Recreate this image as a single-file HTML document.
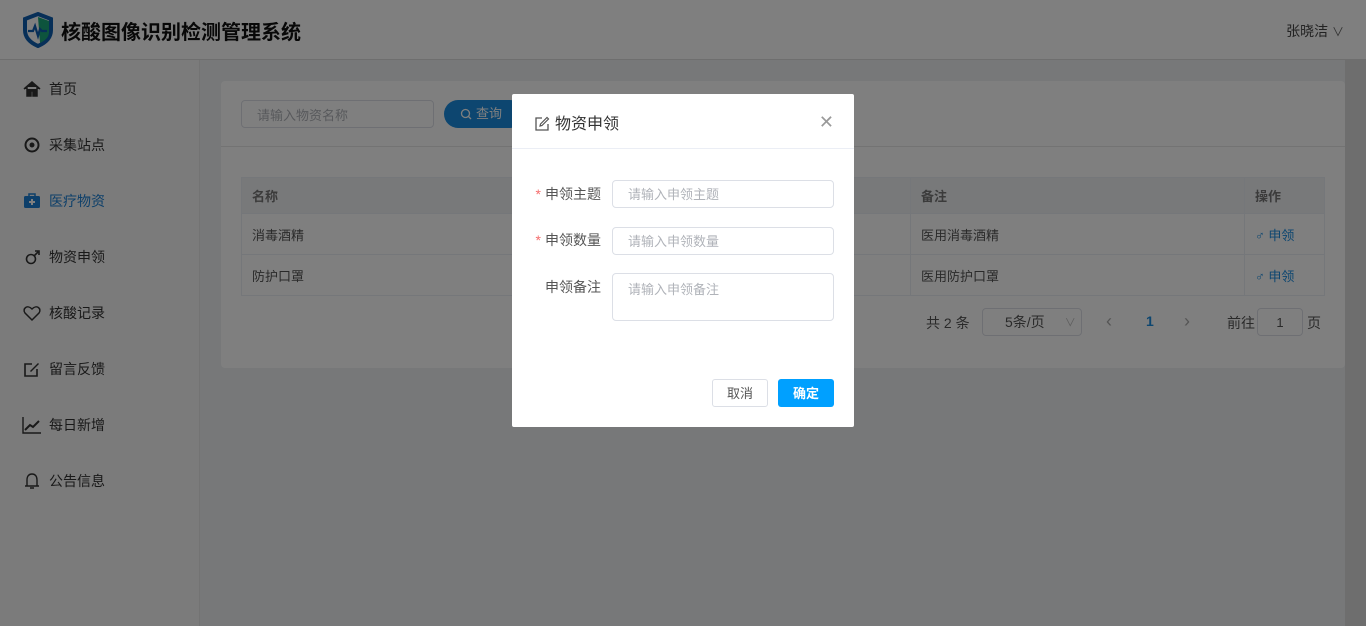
<!DOCTYPE html>
<html><head><meta charset="utf-8"><style>
*{box-sizing:border-box;margin:0;padding:0}
body{width:1366px;height:626px;overflow:hidden;position:relative;background:#eef0f3;font-family:"Liberation Sans","Noto Sans CJK SC",sans-serif;font-size:13px;color:#333}
.hdr{position:absolute;left:0;top:0;width:1366px;height:60px;background:#fff;border-bottom:1px solid #ddd}
.logo{position:absolute;left:22px;top:12px}
.title{position:absolute;left:61px;top:16px;font-size:20px;font-weight:bold;color:#111}
.user{position:absolute;right:22px;top:21px;font-size:14px;color:#444}
.side{position:absolute;left:0;top:60px;width:200px;height:566px;background:#f7f7f7;border-right:1px solid #e6e6e6}
.mi{position:absolute;left:22px;height:20px;display:flex;align-items:center;font-size:14px;color:#333}
.mi svg{width:20px;height:20px;margin-right:7px}
.card{position:absolute;left:221px;top:81px;width:1124px;height:287px;background:#fff;border-radius:4px}
.inp{position:absolute;border:1px solid #dcdfe6;border-radius:4px;background:#fff;color:#b0b3b9;font-size:13px;padding-left:15px;display:flex;align-items:center}
.tbl{position:absolute;left:241px;top:177px;width:1084px;border-collapse:collapse}
.tbl td{border:1px solid #ebeef5;padding-left:10px;height:41px;font-size:13px;color:#555}
.tbl tr.h td{background:#f0f2f5;height:36px;font-weight:bold;color:#777}
.tbl td.op{color:#1a8de0}
.ov{position:absolute;left:0;top:0;width:1366px;height:626px;background:rgba(0,0,0,.5)}
.dlg{position:absolute;left:512px;top:94px;width:342px;height:333px;background:#fff;border-radius:2px}
.lbl{position:absolute;right:253px;font-size:14px;color:#555}
.lbl b{color:#f56c6c;font-weight:normal;margin-right:4px}
.btn{position:absolute;top:285px;height:28px;border-radius:3px;font-size:13px;display:flex;align-items:center;justify-content:center}
</style></head><body>
<div class="hdr">
<svg class="logo" width="32" height="36" viewBox="0 0 32 36"><path d="M16 2 L29 7 V18 C29 26 23 31 16 34 C9 31 3 26 3 18 V7 Z" fill="none" stroke="#0e5eb0" stroke-width="4"/><path d="M16 5 L27 9 V20 C27 26 22 29 18 31 Z" fill="#1aa87a"/><path d="M6 19 H11 L13 14 L16 24 L18 17 L20 19 H25" fill="none" stroke="#0e5eb0" stroke-width="2.2"/></svg>
<div class="title">核酸图像识别检测管理系统</div>
<div class="user">张晓洁 <span style="font-size:12px;color:#666">∨</span></div>
</div>
<div class="side">
<div class="mi" style="top:19px"><svg viewBox="0 0 20 20"><path d="M2 10 L10 3 L18 10 M5 8 V17 H9 V12 H11 V17 H15 V8" fill="#333" stroke="#333" stroke-width="1.5"/></svg>首页</div>
<div class="mi" style="top:75px"><svg viewBox="0 0 20 20"><circle cx="10" cy="10" r="6.5" fill="none" stroke="#333" stroke-width="2"/><circle cx="10" cy="10" r="2.5" fill="#333"/></svg>采集站点</div>
<div class="mi" style="top:131px;color:#1a7fd4"><svg viewBox="0 0 20 20"><rect x="2" y="5" width="16" height="12" rx="1.5" fill="#1a7fd4"/><rect x="7" y="3" width="6" height="3" fill="none" stroke="#1a7fd4" stroke-width="1.5"/><path d="M10 8 V14 M7 11 H13" stroke="#fff" stroke-width="2"/></svg>医疗物资</div>
<div class="mi" style="top:187px"><svg viewBox="0 0 20 20"><circle cx="9" cy="12" r="4.5" fill="none" stroke="#333" stroke-width="1.6"/><path d="M12 9 L16 5 M13 4 H17 V8" fill="none" stroke="#333" stroke-width="1.6"/></svg>物资申领</div>
<div class="mi" style="top:243px"><svg viewBox="0 0 20 20"><path d="M10 17 L3 10 C0 6 5 1 10 6 C15 1 20 6 17 10 Z" fill="none" stroke="#333" stroke-width="1.5"/></svg>核酸记录</div>
<div class="mi" style="top:299px"><svg viewBox="0 0 20 20"><path d="M15 10 V17 H3 V5 H10" fill="none" stroke="#333" stroke-width="1.6"/><path d="M8 12 L16 4 L17 5 L9 13 Z" fill="#333"/></svg>留言反馈</div>
<div class="mi" style="top:355px"><svg viewBox="0 0 20 20"><path d="M1 2 V18 H19" fill="none" stroke="#333" stroke-width="1.4"/><path d="M3 15 L8 10 L11 12 L17 6" fill="none" stroke="#333" stroke-width="2"/></svg>每日新增</div>
<div class="mi" style="top:411px"><svg viewBox="0 0 20 20"><path d="M5 15 V9 C5 5 7 3 10 3 C13 3 15 5 15 9 V15 Z M3 15 H17 M8 17 H12" fill="none" stroke="#333" stroke-width="1.4"/></svg>公告信息</div>
</div>
<div style="position:absolute;left:1345px;top:60px;width:21px;height:566px;background:#dcdcdc"></div>
<div class="card"></div>
<div class="inp" style="left:241px;top:100px;width:193px;height:28px">请输入物资名称</div>
<div style="position:absolute;left:444px;top:100px;width:80px;height:28px;border-radius:14px;background:#1a8de0;color:#fff;font-size:13px;padding-left:16px;line-height:28px;display:flex;align-items:center"><svg width="12" height="12" viewBox="0 0 12 12" style="margin-right:4px"><circle cx="5.5" cy="5.5" r="4" fill="none" stroke="#fff" stroke-width="1.3"/><path d="M8.5 8.5 L11 11" stroke="#fff" stroke-width="1.3"/></svg>查询</div>
<div style="position:absolute;left:221px;top:146px;width:1124px;height:1px;background:#e6e6e6"></div>
<table class="tbl">
<tr class="h"><td style="width:669px">名称</td><td style="width:334px">备注</td><td>操作</td></tr>
<tr><td>消毒酒精</td><td>医用消毒酒精</td><td class="op">♂ 申领</td></tr>
<tr><td>防护口罩</td><td>医用防护口罩</td><td class="op">♂ 申领</td></tr>
</table>
<div style="position:absolute;left:926px;top:313px;font-size:14px;color:#555">共 2 条</div>
<div class="inp" style="left:982px;top:308px;width:100px;height:28px;color:#555;font-size:14px;padding-left:22px">5条/页<span style="margin-left:20px;color:#bbb;font-size:11px">∨</span></div>
<div style="position:absolute;left:1106px;top:311px;color:#aaa;font-size:18px">‹</div>
<div style="position:absolute;left:1146px;top:313px;color:#1a8de0;font-weight:bold;font-size:14px">1</div>
<div style="position:absolute;left:1184px;top:311px;color:#aaa;font-size:18px">›</div>
<div style="position:absolute;left:1227px;top:313px;font-size:14px;color:#555">前往</div>
<div class="inp" style="left:1257px;top:308px;width:46px;height:28px;color:#555;padding-left:0;justify-content:center">1</div>
<div style="position:absolute;left:1307px;top:313px;font-size:14px;color:#555">页</div>
<div class="ov"></div>
<div class="dlg">
<svg style="position:absolute;left:22px;top:22px" width="16" height="16" viewBox="0 0 16 16"><path d="M8 2 H2 V14 H14 V8" fill="none" stroke="#555" stroke-width="1.3"/><path d="M6 10 L6.5 8 L13 1.5 L14.5 3 L8 9.5 Z" fill="none" stroke="#555" stroke-width="1.2"/></svg>
<div style="position:absolute;left:43px;top:21px;font-size:16px;color:#333;line-height:20px">物资申领</div>
<div style="position:absolute;right:20px;top:18px;font-size:18px;color:#999">✕</div>
<div style="position:absolute;left:0;top:54px;width:342px;height:1px;background:#ebeef5"></div>
<div class="lbl" style="top:90px"><b>*</b>申领主题</div>
<div class="inp" style="left:100px;top:86px;width:222px;height:28px;padding-bottom:2px">请输入申领主题</div>
<div class="lbl" style="top:136px"><b>*</b>申领数量</div>
<div class="inp" style="left:100px;top:133px;width:222px;height:28px;padding-bottom:2px">请输入申领数量</div>
<div class="lbl" style="top:183px">申领备注</div>
<div class="inp" style="left:100px;top:179px;width:222px;height:48px;align-items:flex-start;padding-top:5px">请输入申领备注</div>
<div class="btn" style="left:200px;width:56px;border:1px solid #dcdfe6;color:#555;padding-bottom:2px">取消</div>
<div class="btn" style="left:266px;width:56px;background:#00a0ff;color:#fff;font-weight:bold;padding-bottom:2px">确定</div>
</div>
</body></html>
